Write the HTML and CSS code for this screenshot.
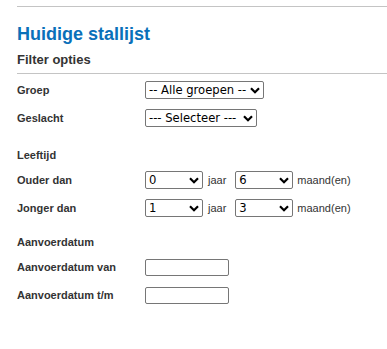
FILE: index.html
```html
<!DOCTYPE html>
<html>
<head>
  <title>Huidige stallijst</title>
  <link rel="stylesheet" href="styles.css">
</head>
<body>
  <div class="page">
    <div class="topline"></div>
    <h1 class="title">Huidige stallijst</h1>
    <h2 class="subtitle">Filter opties</h2>

    <form class="filters" onsubmit="return false">
      <div class="field">
        <label>Groep</label>
        <select class="sel-groep">
          <option>-- Alle groepen --</option>
        </select>
      </div>
      <div class="field">
        <label>Geslacht</label>
        <select class="sel-geslacht">
          <option>--- Selecteer ---</option>
        </select>
      </div>

      <div class="section">Leeftijd</div>
      <div class="field">
        <label>Ouder dan</label>
        <select class="sel-small"><option>0</option></select>
        <span class="unit">jaar</span>
        <select class="sel-small"><option>6</option></select>
        <span class="unit last">maand(en)</span>
      </div>
      <div class="field">
        <label>Jonger dan</label>
        <select class="sel-small"><option>1</option></select>
        <span class="unit">jaar</span>
        <select class="sel-small"><option>3</option></select>
        <span class="unit last">maand(en)</span>
      </div>

      <div class="section second">Aanvoerdatum</div>
      <div class="field">
        <label>Aanvoerdatum van</label>
        <input type="text" class="date">
      </div>
      <div class="field">
        <label>Aanvoerdatum t/m</label>
        <input type="text" class="date">
      </div>
    </form>
  </div>
</body>
</html>
```

FILE: styles.css
```css
body { margin: 0; font-family: Arial, "Liberation Sans", sans-serif; background: #fff; color: #333; }
.page { padding-left: 17px; }
.topline { margin-top: 6px; border-top: 1px solid #c4c4c4; }
.title { margin: 16px 0 0; font-size: 18px; line-height: 22px; font-weight: bold; color: #0a70b9; }
.subtitle { margin: 7px 0 0; padding-bottom: 5px; font-size: 13px; line-height: 16px; font-weight: bold; color: #333; border-bottom: 1px solid #c4c4c4; }
.filters { margin-top: 2px; }
.field { display: flex; align-items: center; height: 28px; font-size: 11px; }
.field label { width: 128px; font-weight: bold; }
.section { margin-top: 12px; height: 22px; line-height: 22px; font-size: 11px; font-weight: bold; }
.section.second { margin-top: 9px; }
select {
  -webkit-appearance: none; appearance: none;
  font-family: "DejaVu Sans", Tahoma, sans-serif; font-size: 11.6px; line-height: 16px;
  height: 18px; padding: 0 0 0 3px; border: 1px solid #767676; border-radius: 2px; color: #000;
  background: #fff url("data:image/svg+xml,%3Csvg xmlns='http://www.w3.org/2000/svg' width='10' height='7' viewBox='0 0 10 7'%3E%3Cpath d='M1 1.2l4 4 4-4' fill='none' stroke='%23000' stroke-width='2.2'/%3E%3C/svg%3E") no-repeat right 3px center;
}
.sel-groep { width: 119px; }
.sel-geslacht { width: 112px; }
.sel-small { width: 58px; }
.unit { margin: 0 9px 0 5px; }
.unit.last { margin: 0 0 0 4px; }
.date { width: 84px; height: 17px; box-sizing: border-box; border: 1px solid #767676; border-radius: 2px; padding: 0 3px; }
```
